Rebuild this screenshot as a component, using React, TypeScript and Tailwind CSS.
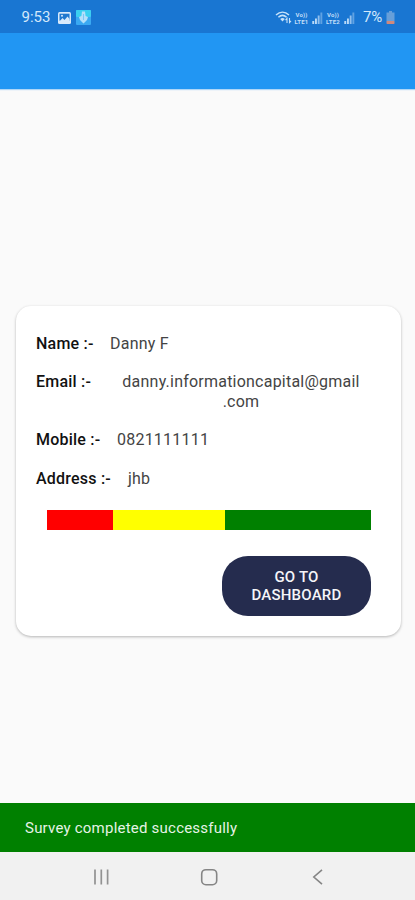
import React from "react";

interface DetailRowProps {
  label: string;
  labelClass: string;
  children: React.ReactNode;
}

const DetailRow: React.FC<DetailRowProps> = ({
  label,
  labelClass,
  children,
}) => (
  <div className="flex items-start text-[16px] leading-[19.5px] tracking-[0.22px]">
    <span
      className={`shrink-0 whitespace-nowrap font-medium text-[#111111] ${labelClass}`}
    >
      {label}
    </span>
    {children}
  </div>
);

const SignalIcon = () => (
  <svg className="h-[12px] w-[11px]" viewBox="0 0 11 12" fill="#b9daf7">
    <rect x="0.3" y="9" width="1.9" height="3" />
    <rect x="3" y="6.5" width="1.9" height="5.5" />
    <rect x="5.7" y="3.5" width="1.9" height="8.5" opacity="0.75" />
    <rect x="8.4" y="0.5" width="1.9" height="11.5" opacity="0.45" />
  </svg>
);

const VolteLabel = ({ sim }: { sim: number }) => (
  <div className="w-[16px] whitespace-nowrap text-center text-[6px] font-bold leading-[7px] tracking-[0.2px] text-[#c3dff8]">
    <div>Vo))</div>
    <div>LTE{sim}</div>
  </div>
);

const StatusBar = () => (
  <div className="flex h-[33px] items-center bg-[#1976d2] pl-[21px] pr-[20px] pt-[2px] text-[#d3e8fb]">
    <span className="w-[37px] pl-[0.5px] text-[15px] leading-none">9:53</span>
    <svg className="h-[12px] w-[13px]" viewBox="0 0 13 12">
      <rect width="13" height="12" rx="1.5" fill="#d8eafb" />
      <rect x="1.5" y="1.7" width="10" height="7" fill="#1f78cf" />
      <path d="M1.5 9.5 4.5 6l2 2 3-3.5 2 2.5v2.5z" fill="#d8eafb" />
      <circle cx="4" cy="3.8" r="1" fill="#d8eafb" />
    </svg>
    <svg className="ml-[5px] h-[15px] w-[15px]" viewBox="0 0 15 15">
      <rect width="15" height="15" rx="1" fill="#3aa9f2" />
      <rect width="15" height="7" rx="1" fill="#3bd0f0" />
      <path
        d="M6 1.5h3l.6 4.5L12 7l-1 3-3.5 3.5L4 10 3 7l2.4-1z"
        fill="#b4e0fa"
      />
      <path d="M7.5 4v6" stroke="#7cc4f5" fill="none" />
    </svg>
    <div className="ml-auto flex items-center">
      <svg className="mr-[1.5px] h-[13px] w-[17px]" viewBox="0 0 17 13" fill="none">
        <path
          d="M1 4c4-3.6 9-3.6 13 0M3.4 6.2c2.5-2.2 5.7-2.2 8.2 0"
          stroke="#c7e2fa"
          strokeWidth="1.5"
        />
        <path d="M5.2 8c1.4-1.2 3.2-1.2 4.6 0l-2.3 2.6z" fill="#c7e2fa" />
        <path
          d="M12 12V7.5l-1.5 1.7M14.5 7v4.5L16 9.8"
          stroke="#c7e2fa"
          strokeWidth="1.1"
        />
      </svg>
      <VolteLabel sim={1} />
      <span className="w-[2px]" />
      <SignalIcon />
      <span className="w-[2.5px]" />
      <VolteLabel sim={2} />
      <span className="w-[3px]" />
      <SignalIcon />
      <span className="ml-[8px] w-[20px] text-[15px] leading-none tracking-[-0.3px]">
        7%
      </span>
      <svg className="ml-[3px] h-[13px] w-[9px]" viewBox="0 0 9 13">
        <path d="M3 0h3v1.5h2.5v9H.5v-9H3z" fill="#679fd9" />
        <rect x="0.5" y="10" width="8" height="3" rx="0.7" fill="#cf897d" />
      </svg>
    </div>
  </div>
);

// Share of each answer group, in pixels of the bar
const segments = [
  { name: "low", className: "w-[66px] bg-[#ff0000]" },
  { name: "medium", className: "w-[112px] bg-[#ffff00]" },
  { name: "high", className: "flex-1 bg-[#008000]" },
];

const ResultCard = () => (
  <div className="ml-[16px] mr-[14px] flex h-[330px] flex-col rounded-[15px] bg-white pl-[20px] pr-[30px] pt-[27.5px] shadow-[0_1px_3px_rgba(0,0,0,0.28)]">
    <div className="flex flex-col gap-[19.2px]">
      <DetailRow label="Name :-" labelClass="w-[74px]">
        <span className="text-[#444444]">Danny F</span>
      </DetailRow>
      <DetailRow label="Email :-" labelClass="w-[85px]">
        <span className="w-[240px] whitespace-nowrap text-center text-[#444444]">
          danny.informationcapital@gmail
          <br />
          .com
        </span>
      </DetailRow>
      <DetailRow label="Mobile :-" labelClass="w-[81px]">
        <span className="text-[#444444]">0821111111</span>
      </DetailRow>
      <DetailRow label="Address :-" labelClass="w-[92px]">
        <span className="text-[#444444]">jhb</span>
      </DetailRow>
    </div>

    <div className="ml-[11px] mt-[21px] flex h-[20px]">
      {segments.map((segment) => (
        <div key={segment.name} className={segment.className} />
      ))}
    </div>

    <button className="ml-auto mt-[26.5px] h-[60px] w-[149px] rounded-[26px] bg-[#252c4e] text-center text-[15px] font-medium leading-[18px] tracking-[0.2px] text-[#f4f5f9]">
      GO TO
      <br />
      DASHBOARD
    </button>
  </div>
);

const NavigationBar = () => (
  <div className="flex h-[48px] items-center bg-[#f1f1f1] pl-[92px] pt-[2px]">
    <svg className="h-[18px] w-[18px]" viewBox="0 0 18 18" fill="none">
      <path d="M3 1.5v15M9.3 1.5v15M15.6 1.5v15" stroke="#929292" strokeWidth="1.7" />
    </svg>
    <svg className="ml-[90px] h-[18px] w-[18px]" viewBox="0 0 18 18" fill="none">
      <rect x="1.7" y="1.7" width="15" height="15" rx="4.2" stroke="#858585" strokeWidth="1.6" />
    </svg>
    <svg className="ml-[91px] h-[18px] w-[18px]" viewBox="0 0 18 18" fill="none">
      <path d="M13 1.8 4.8 9l8.2 7.2" stroke="#858585" strokeWidth="1.6" />
    </svg>
  </div>
);

export default function App() {
  return (
    <div className="flex h-[900px] w-[415px] flex-col overflow-hidden bg-[#fafafa] font-['Roboto',sans-serif]">
      <StatusBar />
      <div className="h-[56px] bg-[#2196f3] shadow-[0_1px_1px_rgba(33,150,243,0.35)]" />
      <main className="flex-1 pt-[217px]">
        <ResultCard />
      </main>
      <div className="flex h-[49px] items-center bg-[#008000] pl-[25px] pt-[2px] text-[15px] tracking-[0.22px] text-[#e6f3e6]">
        Survey completed successfully
      </div>
      <NavigationBar />
    </div>
  );
}
